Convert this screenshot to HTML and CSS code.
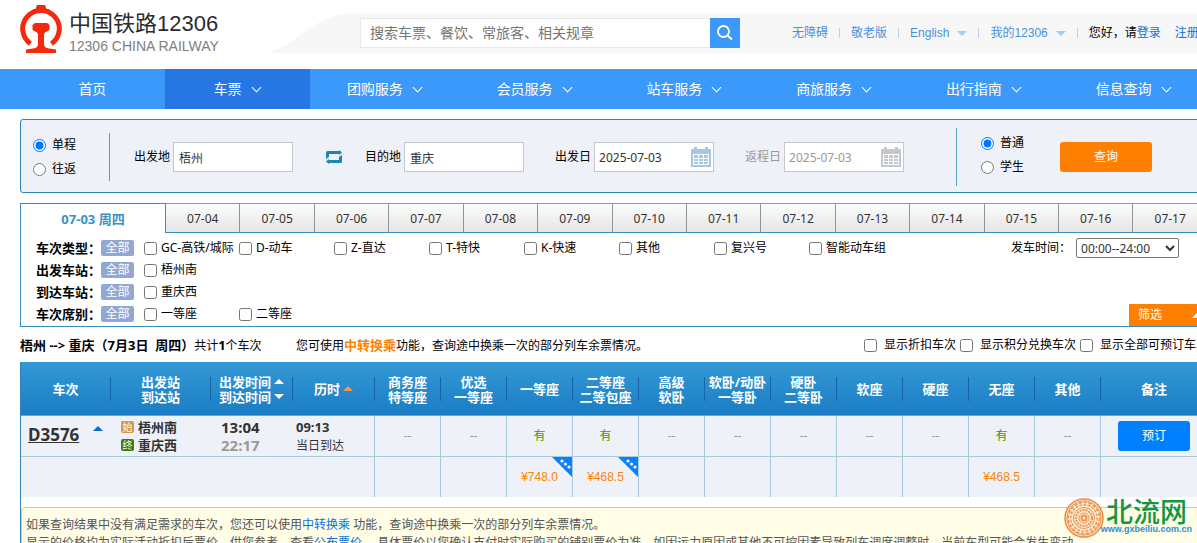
FILE: index.html
```html
<!DOCTYPE html>
<html lang="zh-CN">
<head>
<meta charset="utf-8">
<title>中国铁路12306</title>
<link rel="stylesheet" href="styles.css">
</head>
<body>
<header class="header">
  <a class="logo" href="#">
    <svg class="logo-mark" viewBox="0 0 42 48" width="42" height="48" aria-hidden="true">
      <path fill="none" stroke="#f5280c" stroke-width="5" d="M10.500 38.700A18.300 18.300 0 1 1 31.500 38.700"/>
      <path fill="#f5280c" d="M17 0h8l1.500 4h2.500v3H13V4h2.500zM15 18h12l2.500 2v4.500L28 26q-4 1-4 4v9q0 4 5 4.500l7 1V48H6v-3.500l7-1q5-.5 5-4.500v-9q0-3-4-4l-1.500-1.500V20z"/>
    </svg>
    <span class="logo-text"><span class="logo-name">中国铁路12306</span><span class="logo-sub">12306 CHINA RAILWAY</span></span>
  </a>
  <div class="band">
    <svg class="band-curve" viewBox="0 0 80 40" width="80" height="40" aria-hidden="true"><path fill="#f7f7f7" d="M0 39C25 33 42 3 80 0V40H0z"/></svg>
    <form class="search">
      <input class="search-input" type="text" aria-label="搜索" placeholder="搜索车票、餐饮、常旅客、相关规章">
      <button class="search-btn" type="button" aria-label="搜索"><svg viewBox="0 0 16 16" width="16" height="16"><circle cx="6.500" cy="6.500" r="5.500" fill="none" stroke="#fff" stroke-width="1.800"/><path d="M10.500 10.500L15 14.500" stroke="#fff" stroke-width="2"/></svg></button>
    </form>
    <ul class="links">
      <li><a href="#">无障碍</a></li>
      <li><a href="#">敬老版</a></li>
      <li><a href="#">English<i class="tri"></i></a></li>
      <li><a href="#">我的12306<i class="tri"></i></a></li>
      <li class="hello">您好，请<a class="strong" href="#">登录</a><a class="strong reg" href="#">注册</a></li>
    </ul>
  </div>
</header>
<nav class="nav">
  <a class="nav-item short" href="#">首页</a>
  <a class="nav-item short active" href="#">车票<i class="chev"></i></a>
  <a class="nav-item" href="#">团购服务<i class="chev"></i></a>
  <a class="nav-item" href="#">会员服务<i class="chev"></i></a>
  <a class="nav-item" href="#">站车服务<i class="chev"></i></a>
  <a class="nav-item" href="#">商旅服务<i class="chev"></i></a>
  <a class="nav-item" href="#">出行指南<i class="chev"></i></a>
  <a class="nav-item" href="#">信息查询<i class="chev"></i></a>
</nav>
<main class="main">
  <form class="query">
    <div class="radios trip">
      <label><input type="radio" name="trip" checked>单程</label>
      <label><input type="radio" name="trip">往返</label>
    </div>
    <label class="field from">出发地<input type="text" value="梧州"></label>
    <button class="swap" type="button" aria-label="交换"><svg viewBox="0 0 16 14" width="16" height="14"><path fill="#1788b0" d="M0 9V2.500Q0 1 1.500 1H13V0l3 2.500L13 5V4H3v3zM16 5v6.500q0 1.500-1.500 1.500H3v1l-3-2.500L3 9v1h10V7z"/></svg></button>
    <label class="field">目的地<input type="text" value="重庆"></label>
    <label class="field date">出发日<input type="text" value="2025-07-03"><svg class="cal" viewBox="0 0 20 20" width="20" height="20"><path fill="currentColor" fill-rule="evenodd" d="M0 2h3V0h3v2h8V0h3v2h3v18H0zM2 7v11h16V7zM3 8h4v3H3zm5 0h4v3H8zm5 0h4v3h-4zM3 12h4v2H3zm5 0h4v2H8zm5 0h4v2h-4zM3 15h4v2H3zm5 0h4v2H8zm5 0h4v2h-4z"/></svg></label>
    <label class="field date off">返程日<input type="text" value="2025-07-03"><svg class="cal" viewBox="0 0 20 20" width="20" height="20"><path fill="currentColor" fill-rule="evenodd" d="M0 2h3V0h3v2h8V0h3v2h3v18H0zM2 7v11h16V7zM3 8h4v3H3zm5 0h4v3H8zm5 0h4v3h-4zM3 12h4v2H3zm5 0h4v2H8zm5 0h4v2h-4zM3 15h4v2H3zm5 0h4v2H8zm5 0h4v2h-4z"/></svg></label>
    <div class="radios kind">
      <label><input type="radio" name="kind" checked>普通</label>
      <label><input type="radio" name="kind">学生</label>
    </div>
    <button class="query-btn" type="button">查询</button>
  </form>

  <div class="tabs">
    <button class="tab current">07-03 周四</button><button class="tab">07-04</button><button class="tab">07-05</button><button class="tab">07-06</button><button class="tab">07-07</button><button class="tab">07-08</button><button class="tab">07-09</button><button class="tab">07-10</button><button class="tab">07-11</button><button class="tab">07-12</button><button class="tab">07-13</button><button class="tab">07-14</button><button class="tab">07-15</button><button class="tab">07-16</button><button class="tab">07-17</button>
  </div>

  <section class="filters">
    <div class="frow"><b>车次类型：</b><button class="all">全部</button>
      <label><input type="checkbox">GC-高铁/城际</label><label><input type="checkbox">D-动车</label><label><input type="checkbox">Z-直达</label><label><input type="checkbox">T-特快</label><label><input type="checkbox">K-快速</label><label><input type="checkbox">其他</label><label><input type="checkbox">复兴号</label><label><input type="checkbox">智能动车组</label>
      <span class="depart"><label for="time">发车时间：</label><select id="time"><option>00:00--24:00</option></select></span>
    </div>
    <div class="frow"><b>出发车站：</b><button class="all">全部</button><label><input type="checkbox">梧州南</label></div>
    <div class="frow"><b>到达车站：</b><button class="all">全部</button><label><input type="checkbox">重庆西</label></div>
    <div class="frow"><b>车次席别：</b><button class="all">全部</button><label><input type="checkbox">一等座</label><label><input type="checkbox">二等座</label></div>
    <button class="fold">筛选<i class="up"></i></button>
  </section>

  <div class="summary">
    <p class="route"><b>梧州 --&gt; 重庆（7月3日&nbsp; 周四）</b>共计<b>1</b>个车次</p>
    <p>您可使用<a class="transfer" href="#">中转换乘</a>功能，查询途中换乘一次的部分列车余票情况。</p>
    <div class="shows"><label><input type="checkbox">显示折扣车次</label><label><input type="checkbox">显示积分兑换车次</label><label><input type="checkbox">显示全部可预订车次</label></div>
  </div>

  <div class="results">
  <table class="trains">
    <colgroup><col class="c-no"><col class="c-st"><col class="c-tm"><col class="c-tm"><col class="c-seat" span="11"><col></colgroup>
    <thead><tr><th>车次</th><th>出发站<br>到达站</th><th>出发时间<i class="up"></i><br>到达时间<i class="down"></i></th><th>历时<i class="up orange"></i></th><th>商务座<br>特等座</th><th>优选<br>一等座</th><th>一等座</th><th>二等座<br>二等包座</th><th>高级<br>软卧</th><th>软卧/动卧<br>一等卧</th><th>硬卧<br>二等卧</th><th>软座</th><th>硬座</th><th>无座</th><th>其他</th><th>备注</th></tr></thead>
    <tbody>
    <tr class="train">
      <td class="no"><a href="#">D3576</a><i class="up blue"></i></td>
      <td class="stations"><div><span class="mark">始</span>梧州南</div><div><span class="mark end">终</span>重庆西</div></td>
      <td class="times"><div>13:04</div><div class="arrive">22:17</div></td>
      <td class="span"><b>09:13</b><div>当日到达</div></td>
      <td>--</td><td>--</td><td class="yes">有</td><td class="yes">有</td><td>--</td><td>--</td><td>--</td><td>--</td><td>--</td><td class="yes">有</td><td>--</td>
      <td><button class="book">预订</button></td>
    </tr>
    <tr class="prices"><td colspan="4"></td><td></td><td></td>
      <td><svg class="more" viewBox="0 0 20 20" width="20" height="20"><path fill="#0a80ff" d="M0 0h20v20z"/><g fill="#fff"><circle cx="10" cy="4" r="1.600"/><circle cx="13.500" cy="7" r="1.600"/><circle cx="17" cy="10" r="1.600"/></g></svg>¥748.0</td>
      <td><svg class="more" viewBox="0 0 20 20" width="20" height="20"><path fill="#0a80ff" d="M0 0h20v20z"/><g fill="#fff"><circle cx="10" cy="4" r="1.600"/><circle cx="13.500" cy="7" r="1.600"/><circle cx="17" cy="10" r="1.600"/></g></svg>¥468.5</td>
      <td></td><td></td><td></td><td></td><td></td><td>¥468.5</td><td></td><td></td></tr>
    </tbody>
  </table>
  <div class="tips">
    <p>如果查询结果中没有满足需求的车次，您还可以使用<a href="#">中转换乘</a> 功能，查询途中换乘一次的部分列车余票情况。</p>
    <p>显示的价格均为实际活动折扣后票价，供您参考，查看<a href="#">公布票价</a> 。具体票价以您确认支付时实际购买的铺别票价为准。如因运力原因或其他不可控因素导致列车调度调整时，当前车型可能会发生变动。</p>
  </div>
  </div>
</main>
<div class="stamp">
  <svg viewBox="0 0 40 40" width="40" height="40" aria-hidden="true"><circle cx="20" cy="20" r="19" fill="#fde9cf" stroke="#ec8b45" stroke-width="1.500"/><g fill="none" stroke="#ec9450"><circle cx="20" cy="20" r="14.500" stroke-width="4" stroke-dasharray="3 1.500"/><circle cx="20" cy="20" r="17" stroke-width="1"/><circle cx="20" cy="20" r="10.500" stroke-width="1"/><circle cx="20" cy="20" r="8" stroke-width="2" stroke-dasharray="2 1"/><circle cx="20" cy="20" r="5" stroke-width="1"/><circle cx="20" cy="20" r="2.500" stroke-width="2"/></g><circle cx="20" cy="20" r="14.500" fill="none" stroke="#fde9cf" stroke-width="1"/></svg>
  <div class="stamp-text"><span class="stamp-name">北流网</span><span class="stamp-url">www.gxbeiliu.com.cn</span></div>
</div>
</body>
</html>
```
FILE: styles.css
```css
* { box-sizing: border-box; }
html, body { height: 100%; overflow: hidden; }
body { margin: 0; background: #fff; color: #000; font: 12px/18px "Liberation Sans", "Noto Sans CJK SC", sans-serif; }
a { color: inherit; text-decoration: none; }
p, ul { margin: 0; padding: 0; list-style: none; }
button, input, select { font: inherit; color: inherit; margin: 0; }
button { border: 0; padding: 0; background: none; white-space: nowrap; }
label { white-space: nowrap; }

.header { display: flex; padding-left: 20px; height: 69px; }
.logo { display: flex; gap: 7px; width: 250px; padding-top: 5px; flex: none; }
.logo-text { display: flex; flex-direction: column; padding-top: 5px; color: #2c2c2c; white-space: nowrap; }
.logo-name { font: 400 22px/28px "Liberation Sans", "Noto Sans CJK SC", sans-serif; }
.logo-sub { font-size: 14px; line-height: 16px; color: #808080; }
.band { display: flex; align-items: center; flex: 1; min-width: 0; height: 40px; margin-top: 13px; background: linear-gradient(#f7f7f7, #f7f7f7) 80px 0 no-repeat; }
.band-curve { flex: none; }
.search { display: flex; flex: none; width: 380px; margin: 0 52px 0 10px; }
.search-input { flex: 1; height: 30px; padding: 0 9px; border: 1px solid #e8e8e8; border-right: 0; background: #fff; font-size: 14px; }
.search-input::placeholder { color: #757575; opacity: 1; }
.search-btn { display: grid; place-items: center; width: 30px; height: 30px; background: #3b99fc; }
.links { display: flex; white-space: nowrap; color: #4a90dc; }
.links li { display: flex; align-items: center; }
.links li + li::before { content: ""; width: 1px; height: 10px; margin: 0 11px; background: #b4d2f2; }
.tri { display: inline-block; border: 5px solid transparent; border-top-color: #a5cdf5; border-bottom: 0; margin-left: 8px; vertical-align: 1px; }
.links .hello { color: #000; }
.links .strong { color: #0a72dc; }
.links .reg { margin-left: 14px; }

.nav { display: flex; height: 40px; padding-left: 20px; margin-right: -11px; background: #3b99fc; color: #fff; font-size: 14px; }
.nav-item { flex: 30 1 0; display: flex; justify-content: center; align-items: center; gap: 10px; white-space: nowrap; }
.nav-item.short { flex-grow: 29; }
.nav-item.active { background: #2676e3; }
.chev { width: 7px; height: 7px; border: solid #fff; border-width: 0 1px 1px 0; transform: rotate(45deg); margin: 0 1px 4px; }

.main { margin: 10px -11px 0 20px; }
.query { display: flex; align-items: center; height: 74px; padding-top: 2px; border: 1px solid #2f84b8; border-radius: 3px; background: #eef1f8; }
.radios { display: flex; flex-direction: column; gap: 6px; flex: none; }
.radios label { display: flex; align-items: center; gap: 6px; height: 18px; }
.radios input, .frow input, .shows input { width: 13px; height: 13px; margin: 0; }
.trip { width: 89px; padding: 3px 0; padding-left: 12px; margin-right: 24px; border-right: 1px solid #57a2cc; }
.kind { height: 58px; padding: 6px 0 0 24px; margin: 0 36px 0 52px; border-left: 1px solid #57a2cc; }
.field { position: relative; display: flex; align-items: center; gap: 3px; flex: none; }
.field input { width: 120px; height: 30px; padding: 0 5px; border: 1px solid #c4c6cc; background: #fff; color: #333; }
.date { margin-left: 31px; font-family: "Noto Sans", "Noto Sans CJK SC", sans-serif; }
.date input { padding-left: 4px; }
.cal { position: absolute; right: 3px; top: 5px; color: #a5c8e6; }
.off, .field.off input { color: #999; }
.off .cal { color: #c4c7d0; }
.swap { display: grid; margin: 0 23px 0 33px; }
.query-btn { width: 92px; height: 30px; border-radius: 3px; background: #ff8000; color: #fff; }

.tabs { display: flex; height: 30px; margin-top: 10px; font-family: "Noto Sans", "Noto Sans CJK SC", sans-serif; }
.tab { flex: 1 1 0; min-width: 0; border: solid #8f959b; border-width: 1px 1px 0 0; box-shadow: inset 0 -1px #3d8cbf; background: linear-gradient(#fdfdfd, #e4e4e4); color: #333; }
.tab.current { flex: 0 0 146px; border-color: #3d8cbf; border-left-width: 1px; box-shadow: none; background: #fff; color: #3b8fc9; font-size: 13px; font-weight: 700; }

.filters { position: relative; padding: 4px 0 1px 15px; border: solid #3d8cbf; border-width: 0 0 1px 1px; font-family: "Noto Sans", "Noto Sans CJK SC", sans-serif; }
.frow { display: flex; align-items: center; height: 22px; }
.frow b { width: 65px; font-size: 13px; white-space: nowrap; }
.all { width: 33px; height: 16px; margin-right: 10px; border-radius: 2px; background: #92a8d4; color: #fff; line-height: 16px; }
.frow > label { display: flex; align-items: center; gap: 4px; width: 95px; }
.depart { display: flex; align-items: center; gap: 5px; margin-left: 107px; }
.depart select { width: 103px; height: 20px; padding: 0; border: 1px solid #767676; border-radius: 2px; background: #fff; color: #333; }
.fold { position: absolute; right: 0; bottom: 0; display: flex; align-items: center; justify-content: space-between; width: 79px; height: 22px; padding: 0 6px 0 9px; background: #ff8000; color: #fff; }
.up, .down { display: inline-block; border: 5px solid transparent; border-bottom-color: #fff; border-top: 0; margin-left: 3px; vertical-align: 3px; }
.down { border-top: 5px solid #fff; border-bottom: 0; }
.up.orange { border-bottom-color: #f39a4a; }
.up.blue { border-bottom-color: #0a6ccd; }

.summary { display: flex; align-items: center; height: 35px; padding-top: 1px; white-space: nowrap; font-family: "Noto Sans", "Noto Sans CJK SC", sans-serif; }
.route { width: 276px; }
.summary b, .transfer { font-size: 13px; }
.transfer { color: #fc8302; font-weight: 700; }
.shows { display: flex; gap: 4px; margin-left: auto; }
.shows label { display: flex; align-items: center; gap: 7px; }

.results { border-left: 1px solid #2f84b8; }
.trains { width: 100%; table-layout: fixed; border-collapse: separate; border-spacing: 0; font-family: "Noto Sans", "Noto Sans CJK SC", sans-serif; }
.c-no { width: 90px; }
.c-st { width: 100px; }
.c-tm { width: 82px; }
.c-seat { width: 66px; }
.trains thead { background: linear-gradient(#3499d6, #1a7cc4); }
.trains th { height: 54px; padding: 2px 1px 0 0; border-bottom: 1px solid #5ea9d6; background: linear-gradient(#1663a5, #1663a5) right center / 1px 24px no-repeat; color: #fff; font-size: 13px; line-height: 15px; white-space: nowrap; }
.trains th:last-child { background: none; }
.trains td { padding: 0; border: solid #a8cadb; border-width: 0 1px 1px 0; background: #eef1f8; color: #999; text-align: center; }
.train td { height: 41px; }
.trains .no, .trains .stations, .trains .times { border-right: 0; }
.trains .no { color: #333; text-align: left; padding-left: 7px; white-space: nowrap; }
.no a { font-size: 17px; font-weight: 700; text-decoration: underline; }
.no .up { margin-left: 14px; vertical-align: 10px; }
.trains .stations { padding-left: 10px; color: #333; font-size: 13px; font-weight: 700; text-align: left; }
.stations div { display: flex; align-items: center; gap: 4px; }
.mark { width: 13px; height: 12px; border-radius: 2px; background: #d29a4a; color: #fff; font-size: 10px; font-weight: 400; line-height: 12px; text-align: center; }
.mark.end { background: #3d7a10; }
.trains .times { padding-left: 10px; color: #333; font-size: 15px; font-weight: 700; text-align: left; }
.times .arrive { color: #999; }
.trains .span { padding-left: 3px; color: #333; text-align: left; }
.span b { font-size: 13px; }
.trains .yes { color: #26a306; }
.book { width: 72px; height: 30px; border-radius: 3px; background: #0080ff; color: #fff; }
.prices td { position: relative; height: 40px; border-bottom: 0; color: #fc8302; font-family: "Liberation Sans", sans-serif; }
.more { position: absolute; top: 0; right: 0; }

.tips { margin-top: 10px; padding: 8px 4px; border: 1px solid #e6d42a; border-radius: 4px; background: #fffde6; color: #555; white-space: nowrap; }
.tips a { color: #0a72dc; }

.stamp { position: absolute; right: 5px; bottom: 5px; display: flex; align-items: flex-start; }
.stamp-text { display: flex; flex-direction: column; align-items: center; margin-left: -3px; }
.stamp-name { color: #16963f; font: 500 27px/26px "Noto Sans CJK SC", sans-serif; }
.stamp-url { color: #1f92d4; font: bold 9px/10px "Liberation Sans", sans-serif; }
```
